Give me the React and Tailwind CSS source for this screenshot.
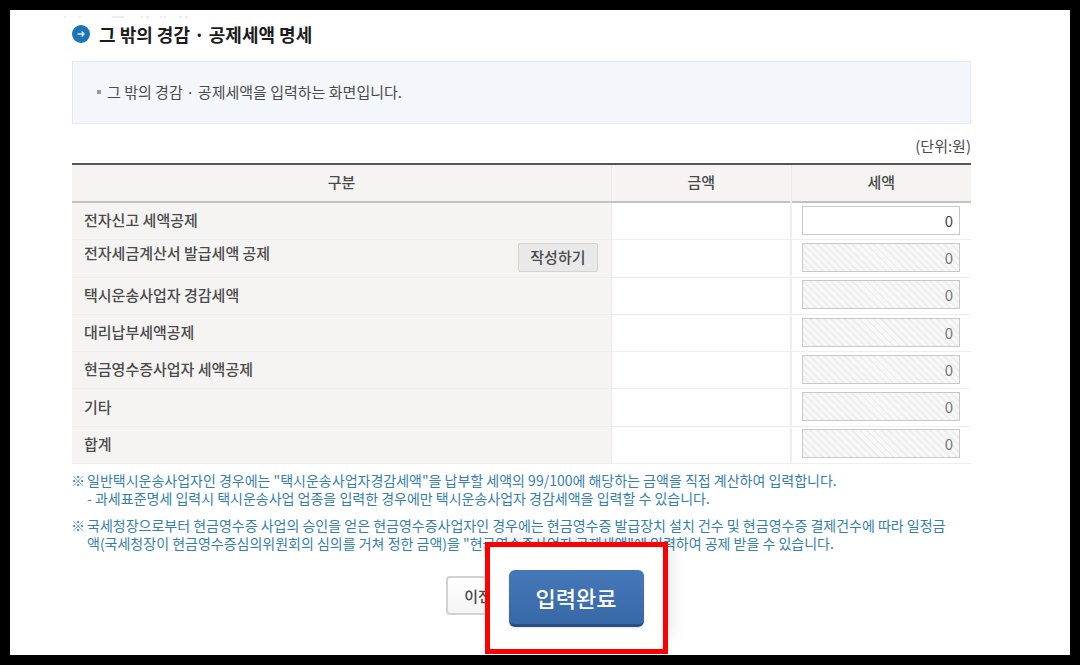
const rows = [
  { id: "efile", label: "전자신고 세액공제", editable: true },
  { id: "einvoice", label: "전자세금계산서 발급세액 공제", action: "작성하기" },
  { id: "taxi", label: "택시운송사업자 경감세액" },
  { id: "proxy", label: "대리납부세액공제" },
  { id: "cash", label: "현금영수증사업자 세액공제" },
  { id: "etc", label: "기타" },
  { id: "total", label: "합계" },
];

function ArrowBullet() {
  return (
    <svg viewBox="0 0 18 18" className="size-[18px] shrink-0" aria-hidden="true">
      <circle cx="9" cy="9" r="9" fill="#1b74b4" />
      <path d="M5.5 9h6.5M9.6 6.6 12 9l-2.4 2.4" fill="none" stroke="#dcecf7" strokeWidth="1.4" />
    </svg>
  );
}

// leftover of the heading scrolled out above the title
function CutHeading() {
  return (
    <svg viewBox="0 0 130 2" className="-ml-2 block h-[2px] w-[130px]" aria-hidden="true">
      <path
        d="M0 1h2M15 1h2M48 1h12M77 1h2M82 1h3M96 1h2M100 1h2M115 1h3M121 1h3"
        stroke="#d9d9d9"
        strokeWidth="1"
      />
    </svg>
  );
}

function AmountRow({ row }) {
  return (
    <tr className="border-b border-[#eeeeee]">
      <th scope="row" className="border-r border-[#eaeaea] bg-[#f5f4f2] pb-0.5 pl-3 pr-[13px] text-left font-medium">
        <div className="flex items-center justify-between">
          <label htmlFor={row.id} className={row.action ? "pb-2" : ""}>{row.label}</label>
          {row.action && (
            <button type="button" className="h-[29px] w-20 rounded-xs border border-[#d3d3d3] bg-[#e9e9e9] font-medium">
              {row.action}
            </button>
          )}
        </div>
      </th>
      <td className="border-r-2 border-[#eeeeee]" />
      <td className="pb-0.5 pl-2.5 pr-[11px]">
        <input
          id={row.id}
          type="text"
          defaultValue="0"
          disabled={!row.editable}
          className="block h-[29px] w-full border border-[#c8c8c8] bg-white px-1.5 text-right text-[#444] disabled:bg-[repeating-linear-gradient(45deg,#f8f8f8_0_3px,#eeeeee_3px_5px)] disabled:text-[#777]"
        />
      </td>
    </tr>
  );
}

export default function App() {
  return (
    <div className="min-h-screen border-10 border-black bg-white pl-[62px] pr-[99px] pt-1.5 font-['Noto_Sans_CJK_KR',sans-serif] text-[15px] leading-5 text-[#4a4a4a]">
      <CutHeading />
      <h1 className="mt-1.5 flex items-center gap-[9px] text-lg leading-5 font-bold text-[#1c1c1c]">
        <ArrowBullet />
        그 밖의 경감 · 공제세액 명세
      </h1>

      <div className="mt-[17px] flex h-[63px] items-center gap-1.5 border border-[#e3eaf4] bg-[#f3f7fc] pb-0.5 pl-6">
        <span className="size-1 bg-[#9b9b9b]" />
        <p>그 밖의 경감 · 공제세액을 입력하는 화면입니다.</p>
      </div>

      <p className="mt-3 text-right leading-5">(단위:원)</p>

      <table className="mt-[7px] h-[301px] w-full table-fixed border-collapse">
        <colgroup>
          <col className="w-[60%]" />
          <col className="w-[20%]" />
          <col className="w-[20%]" />
        </colgroup>
        <thead>
          <tr className="h-[38px] border-t-2 border-b-2 border-t-[#555] border-b-[#c2c2c2] bg-[#f5f4f2]">
            <th scope="col" className="border-r border-[#eaeaea] pb-0.5 font-medium">구분</th>
            <th scope="col" className="border-r border-[#eaeaea] pb-0.5 font-medium">금액</th>
            <th scope="col" className="pb-0.5 font-medium">세액</th>
          </tr>
        </thead>
        <tbody>
          {rows.map((row) => (
            <AmountRow key={row.id} row={row} />
          ))}
        </tbody>
      </table>

      <ul className="-ml-px mt-[7px] space-y-[9px] text-sm leading-[18px] text-[#3480ad]">
        <li className="flex gap-0.5">
          <span>※</span>
          <p className="whitespace-nowrap">
            일반택시운송사업자인 경우에는 "택시운송사업자경감세액"을 납부할 세액의 99/100에 해당하는 금액을 직접 계산하여 입력합니다.
            <br />- 과세표준명세 입력시 택시운송사업 업종을 입력한 경우에만 택시운송사업자 경감세액을 입력할 수 있습니다.
          </p>
        </li>
        <li className="flex gap-0.5">
          <span>※</span>
          <p className="whitespace-nowrap">
            국세청장으로부터 현금영수증 사업의 승인을 얻은 현금영수증사업자인 경우에는 현금영수증 발급장치 설치 건수 및 현금영수증 결제건수에 따라 일정금
            <br />
            액(국세청장이 현금영수증심의위원회의 심의를 거쳐 정한 금액)을 "현금영수증사업자 공제세액"에 입력하여 공제 받을 수 있습니다.
          </p>
        </li>
      </ul>

      <div className="relative mt-6 flex justify-center pr-[87px]">
        <button type="button" className="h-[39px] w-16 rounded-sm border-2 border-[#d2d2d2] bg-linear-to-b from-white to-[#f4f4f4] font-medium">
          이전
        </button>
        {/* enlarged submit button lying over the page */}
        <div className="absolute -top-[34px] left-1/2 -ml-[37px] flex h-28 w-[183px] items-center justify-center border-5 border-[#ff0000] bg-white shadow-[12px_-12px_12px_-6px_#00000014]">
          <button type="button" className="h-[57px] w-[135px] rounded-md border-b-3 border-[#284f85] bg-linear-to-b from-[#4677b9] to-[#3769a8] text-[22px] font-medium text-white shadow-sm">
            입력완료
          </button>
        </div>
      </div>
    </div>
  );
}
